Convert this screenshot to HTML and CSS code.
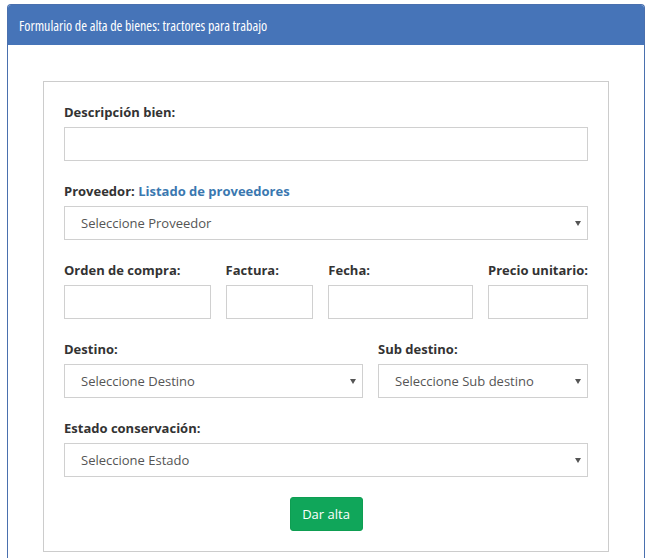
FILE: index.html
```html
<!DOCTYPE html>
<html lang="es">
<head>
<meta charset="utf-8">
<title>Formulario de alta de bienes</title>
<link rel="stylesheet" href="styles.css">
</head>
<body>
<div class="panel">
  <div class="panel-heading">Formulario de alta de bienes: tractores para trabajo</div>
  <div class="panel-body">
    <form class="box">
      <div class="group">
        <label class="lbl">Descripción bien:</label>
        <input class="ctl" type="text">
      </div>
      <div class="group">
        <label class="lbl">Proveedor: <a class="link" href="#">Listado de proveedores</a></label>
        <div class="sel"><select class="ctl"><option>Seleccione Proveedor</option></select></div>
      </div>
      <div class="group row4">
        <div><label class="lbl">Orden de compra:</label><input class="ctl" type="text"></div>
        <div><label class="lbl">Factura:</label><input class="ctl" type="text"></div>
        <div><label class="lbl">Fecha:</label><input class="ctl" type="text"></div>
        <div><label class="lbl">Precio unitario:</label><input class="ctl" type="text"></div>
      </div>
      <div class="group row2">
        <div><label class="lbl">Destino:</label><div class="sel"><select class="ctl"><option>Seleccione Destino</option></select></div></div>
        <div><label class="lbl">Sub destino:</label><div class="sel"><select class="ctl"><option>Seleccione Sub destino</option></select></div></div>
      </div>
      <div class="group">
        <label class="lbl">Estado conservación:</label>
        <div class="sel"><select class="ctl"><option>Seleccione Estado</option></select></div>
      </div>
      <div class="actions">
        <button class="btn" type="button">Dar alta</button>
      </div>
    </form>
  </div>
</div>
</body>
</html>
```
FILE: styles.css
```css
* { box-sizing: border-box; }
html, body { margin: 0; background: #fff; }
body {
  font-family: "Open Sans", "Noto Sans", sans-serif;
  font-size: 13px;
  color: #333;
}
.panel {
  margin: 4px 7px 0 7px;
  border: 1px solid #4a70ae;
  border-bottom: 0;
  border-radius: 4px 4px 0 0;
  min-height: 560px;
}
.panel-heading {
  height: 40px;
  line-height: 41px;
  padding: 0 11px;
  background: #4674b8;
  color: #fff;
  font-family: "Open Sans", sans-serif;
  font-stretch: 75%;
  font-size: 14px;
  border-radius: 3px 3px 0 0;
}
.panel-body {
  padding: 36px 35px 0 35px;
}
.box {
  border: 1px solid #ccc;
  padding: 20px;
  margin: 0;
}
.group { margin-bottom: 20px; }
.lbl {
  display: block;
  font-weight: 700;
  font-size: 13px;
  line-height: 20px;
  margin-bottom: 5px;
  color: #333;
  white-space: nowrap;
}
.link { color: #3a78b0; text-decoration: none; }
.ctl {
  display: block;
  width: 100%;
  height: 34px;
  border: 1px solid #d0d0d0;
  border-radius: 0;
  background: #fff;
  font-family: "Open Sans", sans-serif;
  font-size: 13px;
  color: #555;
  margin: 0;
}
select.ctl {
  appearance: none;
  -webkit-appearance: none;
  padding: 0 24px 0 16px;
}
.sel { position: relative; }
.sel::after {
  content: "";
  position: absolute;
  right: 7px;
  top: 15px;
  border-left: 3px solid transparent;
  border-right: 3px solid transparent;
  border-top: 5px solid #555;
  pointer-events: none;
}
.row4 {
  display: grid;
  grid-template-columns: 147fr 88fr 145fr 99fr;
  column-gap: 15px;
}
.row2 {
  display: grid;
  grid-template-columns: 299fr 210fr;
  column-gap: 15px;
}
.actions { display: flex; justify-content: center; }
.btn {
  width: 73px;
  height: 34px;
  border: 1px solid #0e9e52;
  border-radius: 3px;
  background: #10a65a;
  color: #fff;
  font-family: "Open Sans", sans-serif;
  font-size: 13px;
  padding: 0;
}
```
